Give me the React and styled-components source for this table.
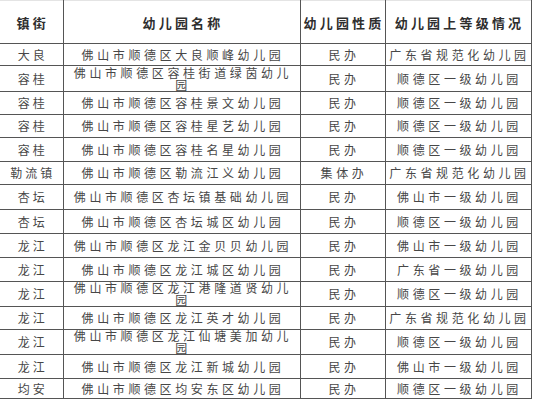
import { styled, createGlobalStyle } from 'styled-components';

const GlobalStyle = createGlobalStyle`
  html, body {
    margin: 0;
    padding: 0;
    background: #fff;
  }
  body {
    font-family: "Noto Sans CJK SC", "Noto Sans", sans-serif;
  }
`;

const Sheet = styled.div`
  width: 533px;
  height: 400px;
  overflow: hidden;
  background: #fff;
`;

const Table = styled.table`
  border-collapse: collapse;
  table-layout: fixed;
  width: 531px;
  border-top: 1px solid #e4e4e4;
  color: #474747;
`;

const Th = styled.th`
  border: 1px solid #555;
  border-top: none;
  font-size: 13px;
  font-weight: 700;
  letter-spacing: 3.2px;
  padding: 0 0 0 3px;
  text-align: center;
  white-space: nowrap;
  color: #2e2e2e;
  &:first-child {
    border-left: none;
  }
`;

const Td = styled.td`
  border: 1px solid #555;
  font-size: 12px;
  line-height: 12px;
  letter-spacing: ${(p) => p.$spacing || 3.6}px;
  padding: 0 0 0 3px;
  text-align: center;
  white-space: nowrap;
  &:first-child {
    border-left: none;
  }
`;

// wrapped names sit tight, as in the source sheet
const Line = styled.div`
  line-height: 12px;
  height: 12px;
`;

const Row = styled.tr`
  height: ${(p) => p.$h}px;
`;

const rows = [
  ['大良', ['佛山市顺德区大良顺峰幼儿园'], '民办', '广东省规范化幼儿园', 22],
  ['容桂', ['佛山市顺德区容桂街道绿茵幼儿', '园'], '民办', '顺德区一级幼儿园', 26],
  ['容桂', ['佛山市顺德区容桂景文幼儿园'], '民办', '顺德区一级幼儿园', 23],
  ['容桂', ['佛山市顺德区容桂星艺幼儿园'], '民办', '顺德区一级幼儿园', 23],
  ['容桂', ['佛山市顺德区容桂名星幼儿园'], '民办', '顺德区一级幼儿园', 24],
  ['勒流镇', ['佛山市顺德区勒流江义幼儿园'], '集体办', '广东省规范化幼儿园', 23],
  ['杏坛', ['佛山市顺德区杏坛镇基础幼儿园'], '民办', '佛山市一级幼儿园', 25],
  ['杏坛', ['佛山市顺德区杏坛城区幼儿园'], '民办', '顺德区一级幼儿园', 24],
  ['龙江', ['佛山市顺德区龙江金贝贝幼儿园'], '民办', '佛山市一级幼儿园', 24],
  ['龙江', ['佛山市顺德区龙江城区幼儿园'], '民办', '广东省一级幼儿园', 24],
  ['龙江', ['佛山市顺德区龙江港隆道贤幼儿', '园'], '民办', '顺德区一级幼儿园', 25],
  ['龙江', ['佛山市顺德区龙江英才幼儿园'], '民办', '广东省规范化幼儿园', 23],
  ['龙江', ['佛山市顺德区龙江仙塘美加幼儿', '园'], '民办', '顺德区一级幼儿园', 24],
  ['龙江', ['佛山市顺德区龙江新城幼儿园'], '民办', '佛山市一级幼儿园', 24],
  ['均安', ['佛山市顺德区均安东区幼儿园'], '民办', '顺德区一级幼儿园', 20],
];

export default function App() {
  return (
    <Sheet>
      <GlobalStyle />
      <Table>
        <colgroup>
          <col style={{ width: 63 }} />
          <col style={{ width: 237 }} />
          <col style={{ width: 85 }} />
          <col style={{ width: 146 }} />
        </colgroup>
        <thead>
          <Row $h={43}>
            <Th>镇街</Th>
            <Th>幼儿园名称</Th>
            <Th>幼儿园性质</Th>
            <Th>幼儿园上等级情况</Th>
          </Row>
        </thead>
        <tbody>
          {rows.map(([town, name, kind, level, h], i) => (
            <Row key={i} $h={h}>
              <Td $spacing={3}>{town}</Td>
              <Td>
                {name.map((line, j) => (
                  <Line key={j}>{line}</Line>
                ))}
              </Td>
              <Td>{kind}</Td>
              <Td>{level}</Td>
            </Row>
          ))}
        </tbody>
      </Table>
    </Sheet>
  );
}
